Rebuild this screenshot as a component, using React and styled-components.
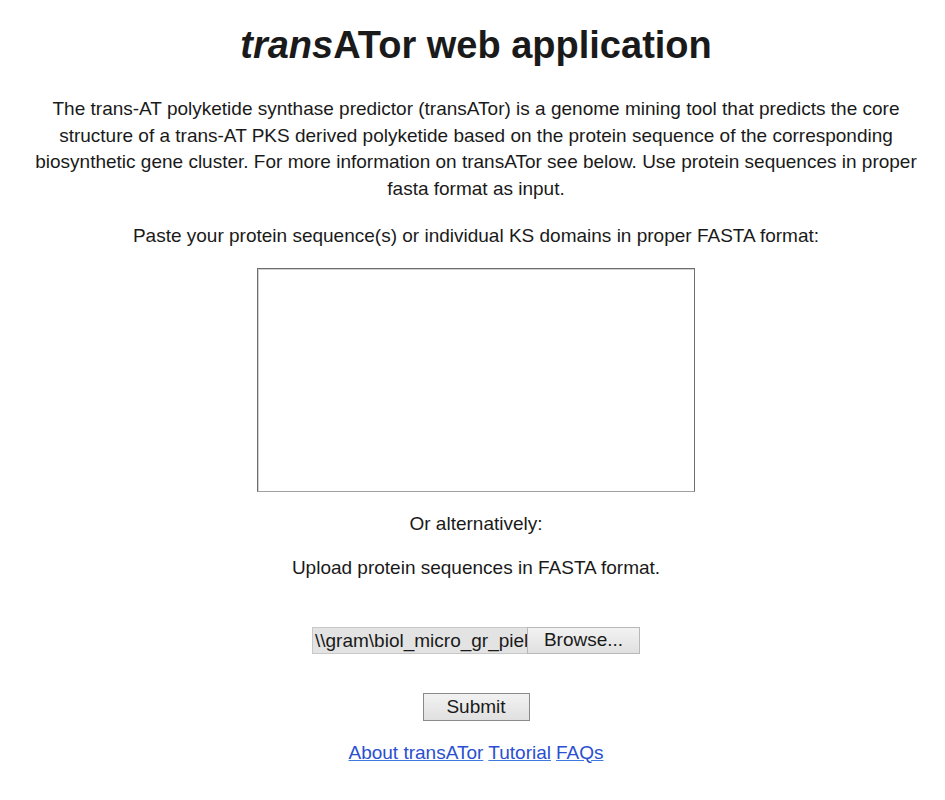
import React from "react";
import styled, { createGlobalStyle } from "styled-components";

const Global = createGlobalStyle`
  html, body { margin: 0; padding: 0; background: #fff; }
  body { font-family: "Liberation Sans", Arial, sans-serif; color: #1a1a1a; }
`;

const Page = styled.main`
  display: flex;
  flex-direction: column;
  align-items: center;
  text-align: center;
  padding: 24px 20px 0 27px;
  font-size: 19px;
  line-height: 26.5px;
`;

const Title = styled.h1`
  margin: 0 0 30px;
  font-size: 38px;
  line-height: 42px;
  font-weight: bold;
  color: #1a1a1a;
  em { font-style: italic; }
`;

const Para = styled.p`
  margin: 0 0 ${(p) => p.$mb || 0}px;
`;

const TextArea = styled.textarea`
  width: 438px;
  height: 224px;
  box-sizing: border-box;
  border: 1px solid #6e6e6e;
  border-bottom-color: #a0a0a0;
  box-shadow: inset 1px 1px 0 #d0d0d0;
  resize: none;
  margin: 0 0 19px;
  font-family: "Liberation Mono", monospace;
`;

const FileRow = styled.div`
  display: flex;
  margin: 45px 0 39px;
  height: 27px;
  box-sizing: border-box;
`;

const FileName = styled.div`
  width: 215px;
  box-sizing: border-box;
  background: #e3e3e3;
  border: 1px solid #c8c8c8;
  border-right: none;
  padding: 0 0 0 2px;
  font-size: 19px;
  line-height: 25px;
  text-align: left;
  white-space: nowrap;
  overflow: hidden;
`;

const Button = styled.button`
  font-family: "Liberation Sans", Arial, sans-serif;
  font-size: 19px;
  color: #1a1a1a;
  background: linear-gradient(#f2f2f2, #e0e0e0);
  border: 1px solid ${(p) => (p.$dark ? "#8a8a8a" : "#b8b8b8")};
  width: ${(p) => p.$w}px;
  height: ${(p) => p.$h}px;
  padding: 0;
  margin: 0;
  cursor: pointer;
`;

const Links = styled.nav`
  margin-top: 19px;
  display: flex;
  gap: 5px;
`;

const Link = styled.a`
  color: #2a4fd0;
  text-decoration: underline;
  text-decoration-color: #3d7be0;
`;

export default function App() {
  return (
    <>
      <Global />
      <Page>
        <Title>
          <em>trans</em>ATor web application
        </Title>
        <Para $mb={21}>
          The trans-AT polyketide synthase predictor (transATor) is a genome
          mining tool that predicts the core structure of a trans-AT PKS
          derived polyketide based on the protein sequence of the corresponding
          biosynthetic gene cluster. For more information on transATor see
          below. Use protein sequences in proper fasta format as input.
        </Para>
        <Para $mb={18}>
          Paste your protein sequence(s) or individual KS domains in proper
          FASTA format:
        </Para>
        <TextArea />
        <Para $mb={18}>Or alternatively:</Para>
        <Para>Upload protein sequences in FASTA format.</Para>
        <FileRow>
          <FileName>\\gram\biol_micro_gr_piel</FileName>
          <Button $w={113} $h={27}>Browse...</Button>
        </FileRow>
        <Button $dark $w={107} $h={28}>Submit</Button>
        <Links>
          <Link href="#">About transATor</Link>
          <Link href="#">Tutorial</Link>
          <Link href="#">FAQs</Link>
        </Links>
      </Page>
    </>
  );
}
